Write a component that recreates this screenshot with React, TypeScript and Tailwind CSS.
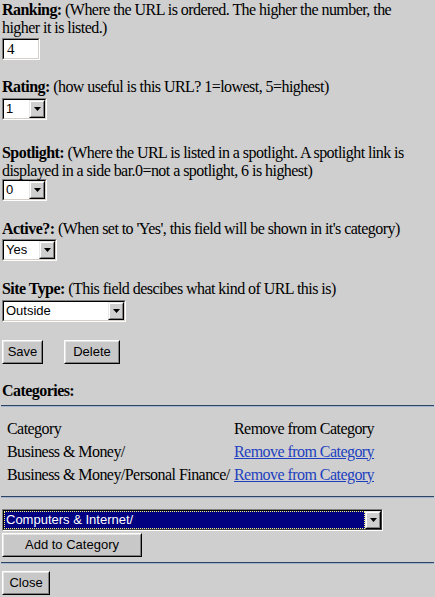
import React from "react";

function Arrow() {
  return (
    <div className="flex w-[16px] items-center justify-center border border-t-[#e8e8e8] border-l-[#e8e8e8] border-b-black border-r-black bg-[#cfcfcf]">
      <div className="flex h-full w-full items-center justify-center border border-t-white border-l-white border-b-[#808080] border-r-[#808080]">
        <svg width="7" height="4" viewBox="0 0 7 4">
          <path d="M0 0H7L3.5 4Z" fill="#000" />
        </svg>
      </div>
    </div>
  );
}

function Select({ w, value }: { w: string; value: string }) {
  return (
    <div className={`flex h-[22px] border border-t-[#808080] border-l-[#808080] border-b-white border-r-white ${w}`}>
      <div className="flex flex-1 border border-t-black border-l-black border-b-[#d4d0c8] border-r-[#d4d0c8] bg-white">
        <div className="flex flex-1 items-center pl-[2px] font-[Liberation_Sans] text-[13px] leading-[16px] tracking-normal text-black">
          {value}
        </div>
        <Arrow />
      </div>
    </div>
  );
}

function FocusSelect({ w, value }: { w: string; value: string }) {
  return (
    <div className={`flex h-[22px] border border-t-[#808080] border-l-[#808080] border-b-white border-r-white ${w}`}>
      <div className="flex flex-1 border border-t-black border-l-black border-b-[#404040] border-r-[#404040] bg-white">
        <div className="flex flex-1 items-center border border-dotted border-[#ffff80] bg-[#000080] pl-[1px] font-[Liberation_Sans] text-[13px] leading-[16px] tracking-normal text-white">
          {value}
        </div>
        <Arrow />
      </div>
    </div>
  );
}

function Button({ w, label }: { w: string; label: string }) {
  return (
    <div className={`flex h-[24px] border border-t-white border-l-white border-b-black border-r-black bg-[#c9c8c9] ${w}`}>
      <div className="flex flex-1 items-center justify-center border border-t-[#e4e4e4] border-l-[#e4e4e4] border-b-[#808080] border-r-[#808080] font-[Liberation_Sans] text-[13px] leading-[16px] tracking-normal text-black">
        {label}
      </div>
    </div>
  );
}

function Hr({ mt }: { mt: string }) {
  return (
    <div className={`mx-[-1px] h-[2px] border-t border-b border-t-[#2f4566] border-b-[#a4b4cc] ${mt}`} />
  );
}

export default function App() {
  return (
    <div className="min-h-[597px] w-[435px] overflow-hidden bg-[#cfcfcf] px-[2px] pt-[1px] font-[Liberation_Serif] text-[16px] leading-[18px] tracking-[-0.55px] text-black">
      <div className="whitespace-nowrap">
        <b>Ranking:</b> (Where the URL is ordered. The higher the number, the
        <br />
        higher it is listed.)
      </div>
      <div className="mt-[1px] flex h-[22px] w-[38px] border border-t-[#808080] border-l-[#808080] border-b-white border-r-white">
        <div className="flex flex-1 items-center border border-t-black border-l-black border-b-[#d4d0c8] border-r-[#d4d0c8] bg-white pl-[3px] text-[15px]">
          4
        </div>
      </div>

      <div className="mt-[18px] whitespace-nowrap">
        <b>Rating:</b> (how useful is this URL? 1=lowest, 5=highest)
      </div>
      <div className="mt-[2px]">
        <Select w="w-[45px]" value="1" />
      </div>

      <div className="mt-[24px] whitespace-nowrap">
        <b>Spotlight:</b> (Where the URL is listed in a spotlight. A spotlight link is
        <br />
        displayed in a side bar.0=not a spotlight, 6 is highest)
      </div>
      <div className="mt-[-1px]">
        <Select w="w-[45px]" value="0" />
      </div>

      <div className="mt-[19px] whitespace-nowrap">
        <b>Active?:</b> (When set to &#39;Yes&#39;, this field will be shown in it&#39;s category)
      </div>
      <div className="mt-[1px]">
        <Select w="w-[55px]" value="Yes" />
      </div>

      <div className="mt-[19px] whitespace-nowrap">
        <b>Site Type:</b> (This field descibes what kind of URL this is)
      </div>
      <div className="mt-[2px]">
        <Select w="w-[124px]" value="Outside" />
      </div>

      <div className="mt-[18px] flex gap-[21px]">
        <Button w="w-[41px]" label="Save" />
        <Button w="w-[56px]" label="Delete" />
      </div>

      <div className="mt-[18px]">
        <b>Categories:</b>
      </div>
      <Hr mt="mt-[5px]" />

      <div className="mt-[10px] pl-[5px] whitespace-nowrap">
        <div className="flex h-[23px] items-center">
          <div className="w-[227px]">Category</div>
          <div>Remove from Category</div>
        </div>
        <div className="flex h-[23px] items-center">
          <div className="w-[227px]">Business &amp; Money/</div>
          <a href="#" className="text-[#1d3fbf] underline">Remove from Category</a>
        </div>
        <div className="flex h-[23px] items-center">
          <div className="w-[227px]">Business &amp; Money/Personal Finance/</div>
          <a href="#" className="text-[#1d3fbf] underline">Remove from Category</a>
        </div>
      </div>

      <Hr mt="mt-[10px]" />

      <div className="mt-[11px]">
        <FocusSelect w="w-[381px]" value="Computers &amp; Internet/" />
      </div>
      <div className="mt-[2px]">
        <Button w="w-[140px]" label="Add to Category" />
      </div>

      <Hr mt="mt-[5px]" />

      <div className="mt-[7px]">
        <Button w="w-[48px]" label="Close" />
      </div>
    </div>
  );
}
